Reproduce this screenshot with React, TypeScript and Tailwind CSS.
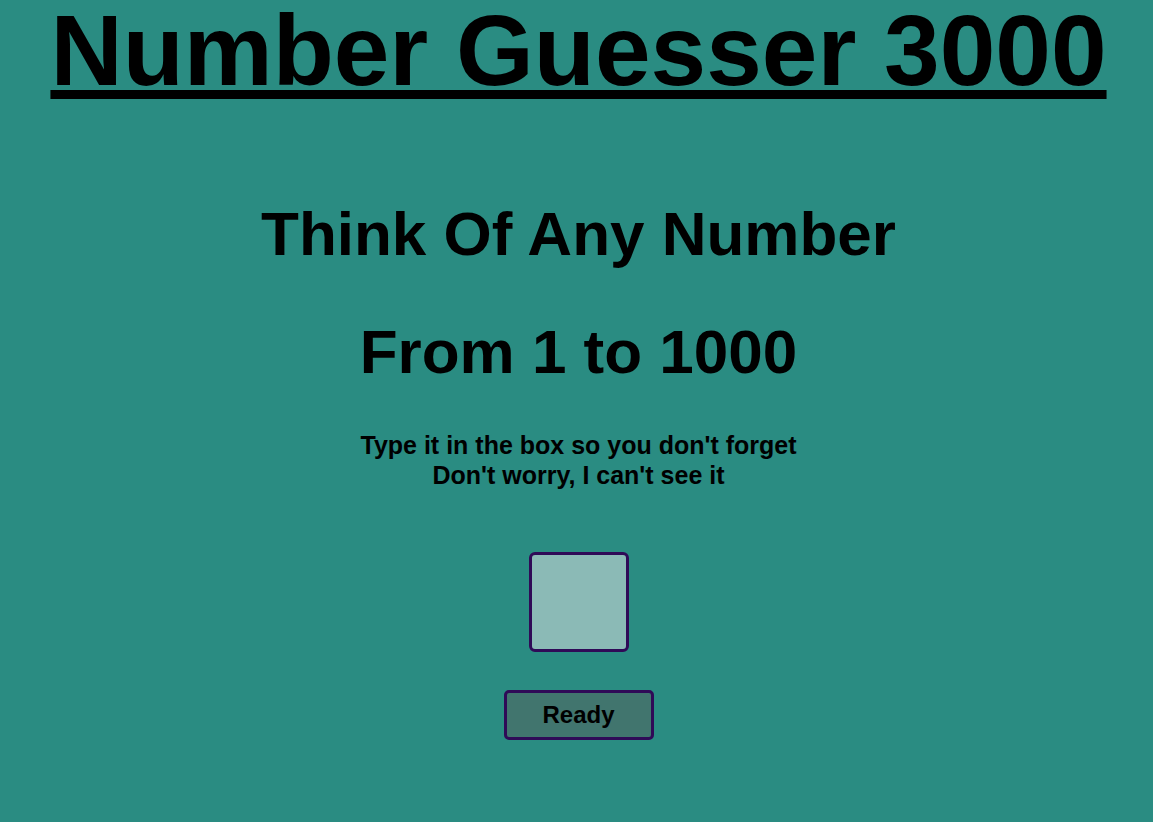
import React from "react";

const App = () => {
  return (
    <div className="min-h-screen bg-[#2a8c82] pl-1 text-black font-['Liberation_Sans',Arial,sans-serif]">
      <div className="flex flex-col items-center text-center">
        <h1 className="text-[100px] font-bold leading-none underline decoration-[9px] underline-offset-[5px]">
          Number Guesser 3000
        </h1>
        <h2 className="mt-[98px] text-[62px] font-bold leading-[71px]">
          Think Of Any Number
        </h2>
        <h2 className="mt-[47px] text-[62px] font-bold leading-[71px]">
          From 1 to 1000
        </h2>
        <p className="mt-[43px] text-[25px] font-bold leading-[30px]">
          Type it in the box so you don&#39;t forget
          <br />
          Don&#39;t worry, I can&#39;t see it
        </p>
        <input
          type="text"
          className="mt-[62px] h-[100px] w-[100px] rounded-md border-[3px] border-[#2f0a57] bg-[#8bbab6] text-center text-[24px] outline-none"
        />
        <button className="mt-[38px] h-[50px] w-[150px] rounded-[5px] border-[3px] border-[#2f0a57] bg-[#41756e] text-[24px] font-bold">
          Ready
        </button>
      </div>
    </div>
  );
};

export default App;
